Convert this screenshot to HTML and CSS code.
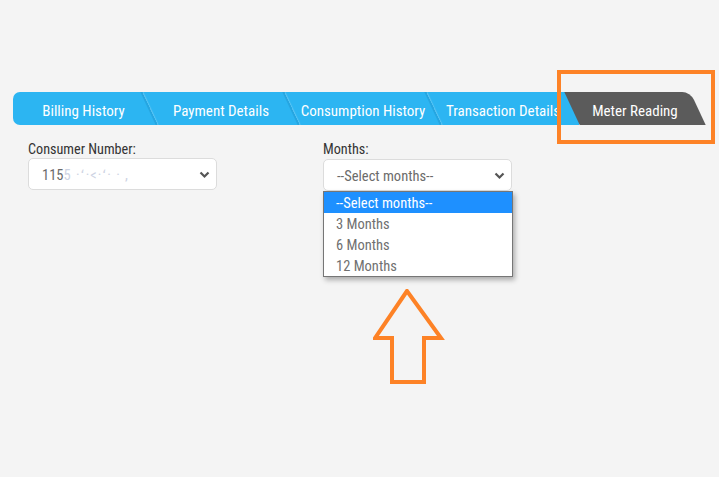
FILE: index.html
```html
<!DOCTYPE html>
<html>
<head>
<meta charset="utf-8">
<link rel="stylesheet" href="styles.css">
</head>
<body>
<div class="page">
  <div class="tabs">
    <div class="blue-group">
      <div class="tab t1">Billing History</div>
      <div class="tab t2">Payment Details</div>
      <div class="tab t3">Consumption History</div>
      <div class="tab t4">Transaction Details</div>
    </div>
    <div class="tab active">Meter Reading</div>
  </div>

  <div class="form">
    <div class="field f1">
      <div class="label">Consumer Number:</div>
      <div class="select"><span class="val">115<span class="blur">5 ·ʻ·&lt;·ʻ· · ,</span></span>
        <svg class="chev" width="11" height="8" viewBox="0 0 11 8"><path d="M1.5 1.5 L5.5 5.5 L9.5 1.5" fill="none" stroke="#555" stroke-width="2.2"/></svg>
      </div>
    </div>
    <div class="field f2">
      <div class="label">Months:</div>
      <div class="select"><span class="val">--Select months--</span>
        <svg class="chev" width="11" height="8" viewBox="0 0 11 8"><path d="M1.5 1.5 L5.5 5.5 L9.5 1.5" fill="none" stroke="#555" stroke-width="2.2"/></svg>
      </div>
      <div class="menu">
        <div class="opt sel">--Select months--</div>
        <div class="opt">3 Months</div>
        <div class="opt">6 Months</div>
        <div class="opt">12 Months</div>
      </div>
    </div>
  </div>

  <div class="highlight"></div>
  <svg class="arrow" width="80" height="100" viewBox="0 0 80 100">
    <polygon points="34,2 2,49 19,49 19,93 51,93 51,49 68,49" fill="none" stroke="#fd8226" stroke-width="4" stroke-linejoin="miter"/>
  </svg>
</div>
</body>
</html>
```
FILE: styles.css
```css
html, body {
  margin: 0;
  padding: 0;
  background: #f4f4f4;
}
.page {
  position: relative;
  width: 719px;
  height: 477px;
  font-family: "Liberation Sans Narrow", "Roboto Condensed", "DejaVu Sans Condensed", sans-serif;
  overflow: hidden;
}
.tabs {
  display: flex;
  margin: 92px 0 0 13px;
  height: 33px;
}
.blue-group {
  display: flex;
  background: #2cb5f2;
  border-radius: 7px 0 0 7px;
  height: 33px;
  width: 566px;
}
.tab {
  position: relative;
  height: 33px;
  line-height: 39px;
  color: #fff;
  font-size: 15px;
  text-align: center;
  white-space: nowrap;
}
.t1 { width: 137px; padding-left: 4px; box-sizing: border-box; }
.t2 { width: 142px; }
.t3 { width: 142px; }
.t4 { width: 138px; }
.t1::after, .t2::after, .t3::after {
  content: "";
  position: absolute;
  top: 0;
  right: 0;
  width: 2px;
  height: 33px;
  background: rgba(20, 110, 160, 0.22);
  transform: skewX(25deg);
  box-shadow: 1px 0 1px rgba(255,255,255,0.25);
}
.active {
  width: 126px;
  margin-left: -7px;
  z-index: 2;
}
.active::before {
  content: "";
  position: absolute;
  inset: 0;
  background: #5b5b5b;
  transform: skewX(25deg);
  border-radius: 0 8px 0 0;
  z-index: -1;
}
.form {
  display: flex;
  gap: 106px;
  padding: 15px 0 0 28px;
}
.field {
  position: relative;
  width: 189px;
}
.label {
  font-size: 14.2px;
  color: #333;
  height: 19px;
  line-height: 18px;
}
.select {
  margin-top: -1px;
  height: 30px;
  background: #fff;
  border: 1px solid #dcdcdc;
  border-radius: 5px;
  display: flex;
  align-items: center;
  justify-content: space-between;
  padding: 0 6px 0 13px;
  font-size: 14.5px;
  color: #6b6b6b;
}
.f2 .select { margin-top: 0; }
.val { padding-top: 2px; }
.blur {
  color: #cdd3e3;
  letter-spacing: 1px;
}
.chev { margin-top: 1px; }
.menu {
  position: absolute;
  top: 51px;
  left: 0;
  width: 188px;
  background: #fff;
  border: 1px solid #767676;
  box-shadow: 2px 3px 5px rgba(0,0,0,0.3);
}
.opt {
  height: 21px;
  line-height: 23px;
  padding-left: 12px;
  font-size: 14.5px;
  color: #707070;
}
.opt.sel {
  background: #1e90ff;
  color: #fff;
}
.highlight {
  position: absolute;
  left: 557px;
  top: 70px;
  width: 150px;
  height: 66px;
  border: 4px solid #fd8226;
}
.arrow {
  position: absolute;
  left: 373px;
  top: 289px;
}
```
